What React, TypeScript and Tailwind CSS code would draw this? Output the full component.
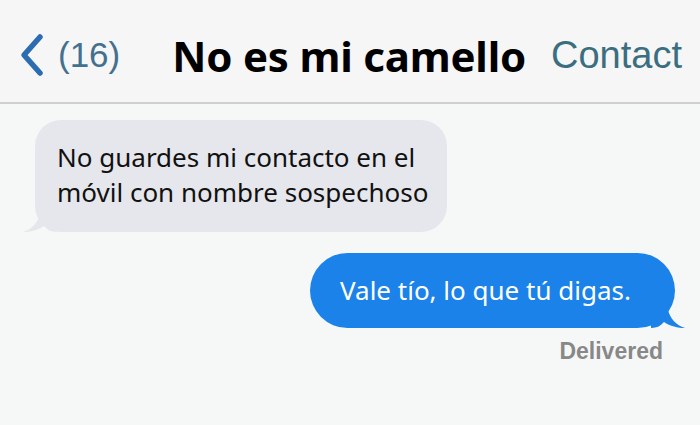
import React from 'react';

function BackChevron() {
  return (
    <svg width="30" height="44" viewBox="0 0 30 44" className="shrink-0">
      <path d="M23 4 L7 22 L23 40" fill="none" stroke="#2c6cb0" strokeWidth="5.5" strokeLinecap="round" strokeLinejoin="round" />
    </svg>
  );
}

export default function App() {
  return (
    <div className="w-[700px] h-[425px] bg-[#f6f8f7] overflow-hidden flex flex-col">
      <header className="h-[104px] shrink-0 bg-[#f6f6f6] border-b-2 border-[#cfcfcf] flex items-center pl-[17px] pr-[18px] pt-[8px]">
        <BackChevron />
        <span className="ml-[11px] text-[35px] text-[#44708f] font-['Liberation_Sans',Arial,sans-serif]">(16)</span>
        <h1 className="ml-[52px] text-[42px] font-bold text-black tracking-[-0.2px] font-['Noto_Sans',sans-serif]">
          No es mi camello
        </h1>
        <span className="ml-auto text-[38px] text-[#3a6e80] font-['Liberation_Sans',Arial,sans-serif]">Contact</span>
      </header>

      <main className="flex-1 flex flex-col font-['Noto_Sans',sans-serif]">
        <div className="relative ml-[35px] mt-[16px] w-[412px] h-[112px] rounded-[26px] bg-[#e6e7ec] pl-[22px] pt-[20px]">
          <p className="text-[26px] leading-[35px] text-[#111]">
            No guardes mi contacto en el
            <br />
            móvil con nombre sospechoso
          </p>
          <svg width="34" height="30" viewBox="0 0 34 30" className="absolute left-[-12px] bottom-[-1px]">
            <path d="M0 29 C9 26 15 20 18 8 L18 0 L34 0 L34 29 C26 29 23 25 21 23 C15 27 7 29 0 29 Z" fill="#e6e7ec" />
          </svg>
        </div>

        <div className="relative self-end mr-[25px] mt-[21px] w-[365px] h-[75px] rounded-[38px] bg-[#1b82ea] flex items-center pl-[30px]">
          <span className="text-[26px] text-white">Vale tío, lo que tú digas.</span>
          <svg width="34" height="30" viewBox="0 0 34 30" className="absolute right-[-10px] bottom-[-1px]">
            <path d="M34 29 C25 26 19 20 16 8 L16 0 L0 0 L0 29 C8 29 11 25 13 23 C19 27 27 29 34 29 Z" fill="#1b82ea" />
          </svg>
        </div>

        <span className="self-end mr-[37px] mt-[6px] text-[23px] font-bold text-[#888888] font-['Liberation_Sans',Arial,sans-serif]">
          Delivered
        </span>
      </main>
    </div>
  );
}
